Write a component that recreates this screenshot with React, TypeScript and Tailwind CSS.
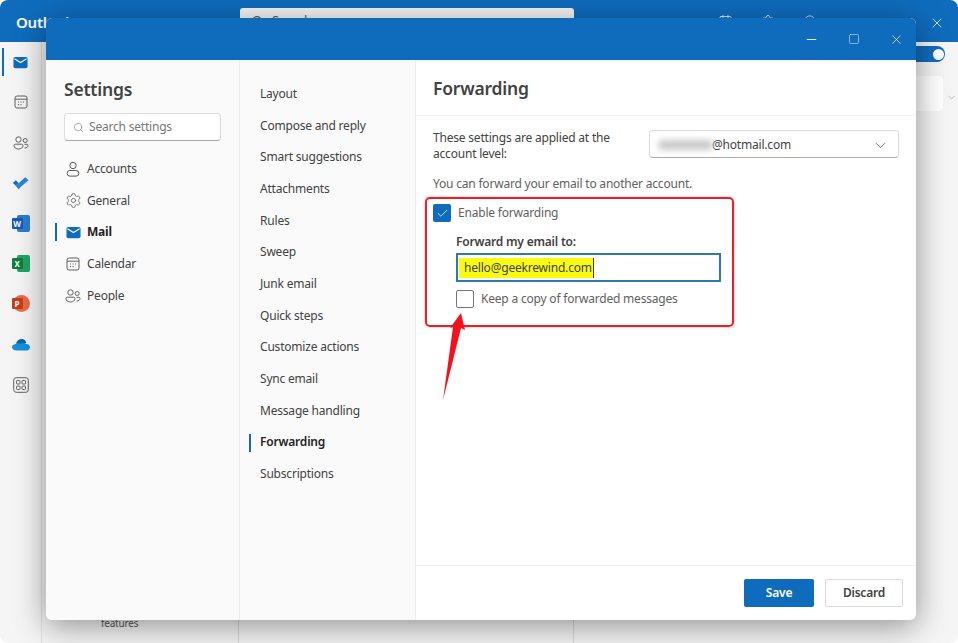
import { Calendar, Check, ChevronDown, Minus, Search, Settings, Square, X } from 'lucide-react';

const font = { fontFamily: '"Noto Sans", "Open Sans", sans-serif' };

const MailIcon = ({ className }: { className: string }) => (
  <svg viewBox="0 0 16 13" className={className}>
    <rect x="0.5" y="0.5" width="15" height="12" rx="2" fill="#0f6cbd" />
    <path d="M1.5 2.5 8 6.5l6.5-4" fill="none" stroke="#fff" strokeWidth="1.2" />
  </svg>
);

const PersonIcon = () => (
  <svg viewBox="0 0 16 16" className="w-[16px] h-[16px]" fill="none" stroke="#555" strokeWidth="1">
    <circle cx="8" cy="4.5" r="3.2" />
    <rect x="2.2" y="9.5" width="11.6" height="5.6" rx="2.6" />
  </svg>
);

const PeopleIcon = ({ className }: { className: string }) => (
  <svg viewBox="0 0 16 14" className={className} fill="none" stroke="#616161" strokeWidth="1">
    <circle cx="5.5" cy="3.5" r="2.7" />
    <path d="M1 9.5c0-.8.6-1.3 1.4-1.3h6.2c.8 0 1.4.5 1.4 1.3 0 2.4-2.2 3.5-4.5 3.5S1 11.9 1 9.5Z" />
    <circle cx="12.2" cy="4.5" r="2" />
    <path d="M11.5 8.3h2.3c.7 0 1.2.5 1.2 1.1 0 1.7-1.4 2.6-3.3 2.6" />
  </svg>
);

const CalendarSmall = ({ className }: { className: string }) => (
  <svg viewBox="0 0 14 14" className={className} fill="none" stroke="#616161" strokeWidth="1">
    <rect x="1" y="1" width="12" height="12" rx="2" />
    <path d="M1 4.2h12" />
    <path d="M4 7h1M6.5 7h1M9 7h1M4 9.6h1M6.5 9.6h1" strokeWidth="1.2" />
  </svg>
);

const OfficeIcon = ({ letter, from, to }: { letter: string; from: string; to: string }) => (
  <div className="relative w-[18px] h-[17px]">
    <div className="absolute right-0 top-0 w-[13px] h-[17px] rounded-[2px]" style={{ background: to }} />
    <div
      className="absolute left-0 top-[3px] w-[11px] h-[11px] rounded-[1px] text-white text-[8px] font-bold leading-[11px] text-center"
      style={{ background: from }}
    >
      {letter}
    </div>
  </div>
);

const railItems = [
  <MailIcon key="mail" className="w-[15px] h-[13px]" />,
  <CalendarSmall key="cal" className="w-[14px] h-[14px]" />,
  <PeopleIcon key="people" className="w-[16px] h-[14px]" />,
  <svg key="todo" viewBox="0 0 18 14" className="w-[17px] h-[14px]">
    <path d="M1 7l3-3 3 3-3 3z" fill="#0f6cbd" />
    <path d="M4 10l3-3 3 3-3 4z" fill="#5aa6e6" />
    <path d="M7 13l-3-3L14 1l3.5 3z" fill="#2b88d8" />
  </svg>,
  <OfficeIcon key="w" letter="W" from="#185abd" to="#2b7cd3" />,
  <OfficeIcon key="x" letter="X" from="#107c41" to="#21a366" />,
  <div key="p" className="relative w-[18px] h-[17px]">
    <div className="absolute right-0 top-0 w-[17px] h-[17px] rounded-full bg-[#ed6c47]" />
    <div className="absolute left-0 top-[3px] w-[11px] h-[11px] rounded-[1px] bg-[#c43e1c] text-white text-[8px] font-bold leading-[11px] text-center">
      P
    </div>
  </div>,
  <svg key="cloud" viewBox="0 0 18 13" className="w-[18px] h-[13px]">
    <path d="M4 5.5C5 2 8 .5 10.5 1c2 .4 3.4 2 3.8 3.8L8 8.5z" fill="#0364b8" />
    <path d="M4.5 12.5h10c2 0 3.5-1.3 3.5-3.2 0-1.8-1.6-3.5-3.8-3.3C12.5 4.5 10 4.5 8.500 6 7 4.5 4.5 4.5 3.5 6 1.5 6.3 0 7.5 0 9.3c0 2 2 3.2 4.5 3.2Z" fill="#1490df" />
  </svg>,
  <svg key="apps" viewBox="0 0 16 16" className="w-[16px] h-[16px]" fill="none" stroke="#616161" strokeWidth="1">
    <rect x="0.7" y="0.7" width="14.6" height="14.6" rx="2.5" />
    <rect x="3.5" y="3.5" width="3.5" height="3.5" rx="0.8" />
    <rect x="9" y="3.5" width="3.5" height="3.5" rx="0.8" />
    <rect x="3.5" y="9" width="3.5" height="3.5" rx="0.8" />
    <rect x="9" y="9" width="3.5" height="3.5" rx="0.8" />
  </svg>,
];

const subItems = [
  'Layout',
  'Compose and reply',
  'Smart suggestions',
  'Attachments',
  'Rules',
  'Sweep',
  'Junk email',
  'Quick steps',
  'Customize actions',
  'Sync email',
  'Message handling',
  'Forwarding',
  'Subscriptions',
];

const navItems = [
  { label: 'Accounts', icon: <PersonIcon /> },
  { label: 'General', icon: <Settings size={17} strokeWidth={1.1} color="#555" /> },
  { label: 'Mail', icon: <MailIcon className="w-[15px] h-[13px]" />, active: true },
  { label: 'Calendar', icon: <CalendarSmall className="w-[14px] h-[14px]" /> },
  { label: 'People', icon: <PeopleIcon className="w-[16px] h-[14px]" /> },
];

export default function App() {
  return (
    <div style={font} className="relative w-[958px] h-[643px] overflow-hidden bg-white text-[12px] tracking-[-0.2px]">
      {/* Outlook window behind the dialog */}
      <div className="flex flex-col h-full rounded-lg overflow-hidden bg-[#f5f5f5]">
        <div className="flex h-[42px] bg-[#0f6cbd] text-white shrink-0">
          <div className="w-[240px] pl-[16px] pt-[12px] text-[15px] font-semibold leading-[20px]">Outlook</div>
          <div className="w-[334px] h-[26px] mt-[8px] bg-[#f5f5f5] rounded-[3px] flex items-center gap-2 pl-[11px] text-[13px] text-[#555]">
            <Search size={13} />
            Search
          </div>
          <div className="flex-1 flex items-start pt-[14px] pl-[144px] gap-[27px]">
            <Calendar size={15} strokeWidth={1.2} />
            <Settings size={16} strokeWidth={1.2} />
            <Search size={15} strokeWidth={1.2} />
          </div>
          <div className="flex items-center pr-[13px] pt-[4px]">
            <X size={16} strokeWidth={1.2} />
          </div>
        </div>
        <div className="flex flex-1">
          <div className="w-[42px] border-r border-[#e0e0e0] relative">
            <div className="absolute left-[2px] top-[6px] w-[2px] h-[28px] bg-[#0f6cbd]" />
            {railItems.map((item, i) => (
              <div key={i} className="h-[40.3px] flex items-center justify-center">
                {item}
              </div>
            ))}
          </div>
          <div className="w-[197px] border-r border-[#d8d8d8] flex flex-col justify-end pl-[59px] pb-[12px] text-[10px] text-[#555]">
            features
          </div>
          <div className="w-[335px] border-r border-[#d8d8d8]" />
          <div className="flex-1 flex flex-col items-end pt-[4px] pr-[13px]">
            <div className="w-[40px] h-[16px] rounded-full bg-[#0f6cbd] flex items-center justify-end pr-[1px]">
              <div className="w-[11px] h-[11px] rounded-full bg-white" />
            </div>
            <div className="flex items-center mt-[14px] -mr-[12px]">
              <div className="w-[30px] h-[35px] bg-white rounded-[3px]" />
              <ChevronDown size={11} strokeWidth={1} color="#777" className="ml-[3px] mt-[8px]" />
            </div>
          </div>
        </div>
      </div>

      {/* Settings dialog */}
      <div className="absolute left-[46px] top-[18px] w-[870px] h-[602px] flex flex-col rounded-md overflow-hidden bg-white shadow-[0_6px_32px_rgba(0,0,0,0.42)]">
        <div className="h-[42px] shrink-0 bg-[#0f6cbd] flex items-center justify-end text-white pr-[12px] gap-[29px]">
          <Minus size={15} strokeWidth={1.4} />
          <Square size={12} strokeWidth={1} />
          <X size={15} strokeWidth={1.1} />
        </div>
        <div className="flex flex-1 min-h-0 text-[#424242]">
          {/* left nav */}
          <div className="w-[194px] bg-[#fafafa] border-r border-[#ececec] pl-[18px] pr-[18px] shrink-0">
            <div className="text-[17.5px] font-semibold leading-[24px] mt-[17px]">Settings</div>
            <div className="mt-[12px] h-[28px] bg-white border border-[#dcdcdc] border-b-[#aaa] rounded-[4px] flex items-center gap-[5px] pl-[8px] text-[#777]">
              <Search size={11} strokeWidth={1.3} />
              Search settings
            </div>
            <div className="mt-[12px]">
              {navItems.map((n) => (
                <div key={n.label} className="relative h-[31.7px] flex items-center">
                  {n.active && <div className="absolute -left-[9px] top-[7px] w-[2px] h-[18px] bg-[#0f6cbd]" />}
                  <div className="w-[18px] flex justify-center mr-[5px]">{n.icon}</div>
                  <span className={n.active ? 'font-bold text-[#242424]' : ''}>{n.label}</span>
                </div>
              ))}
            </div>
          </div>

          {/* sub nav */}
          <div className="w-[176px] bg-[#fafafa] border-r border-[#ececec] shrink-0 pt-[18px] pl-[20px]">
            {subItems.map((s) => (
              <div key={s} className="relative h-[31.7px] flex items-center">
                {s === 'Forwarding' && <div className="absolute -left-[11px] top-[7px] w-[2px] h-[18px] bg-[#0f6cbd]" />}
                <span className={s === 'Forwarding' ? 'font-semibold text-[#242424]' : ''}>{s}</span>
              </div>
            ))}
          </div>

          {/* content */}
          <div className="flex-1 flex flex-col min-w-0">
            <div className="h-[56px] shrink-0 border-b border-[#f0f0f0] pl-[17px] pt-[16px] text-[17.5px] font-semibold leading-[24px]">
              Forwarding
            </div>
            <div className="flex-1 pl-[17px] pr-[17px] pt-[14px]">
              <div className="flex">
                <div className="w-[216px] leading-[16px]">
                  These settings are applied at the
                  <br />
                  account level:
                </div>
                <div className="w-[250px] h-[28px] bg-white border border-[#dcdcdc] border-b-[#aaa] rounded-[4px] flex items-center pl-[9px] pr-[9px] pt-[2px]">
                  <div className="w-[53px] h-[10px] bg-[#c9c9c9] blur-[3px]" />
                  @hotmail.com
                  <ChevronDown size={17} strokeWidth={1} className="ml-auto" />
                </div>
              </div>
              <div className="mt-[14px] leading-[16px] text-[#616161]">You can forward your email to another account.</div>

              {/* red annotation box */}
              <div className="relative -ml-[8px] mt-[5px] w-[309px] h-[130px] border-2 border-[#e8202a] rounded-[5px] pl-[6px] pt-[5px] shadow-[0_0_2px_rgba(232,32,42,0.5)]">
                <div className="flex items-center h-[18px] text-[#616161]">
                  <div className="w-[18px] h-[18px] bg-[#0f6cbd] rounded-[2px] flex items-center justify-center mr-[7px]">
                    <Check size={13} strokeWidth={1.4} color="#fff" />
                  </div>
                  Enable forwarding
                </div>
                <div className="ml-[23px] mt-[12px] font-semibold leading-[16px]">Forward my email to:</div>
                <div className="ml-[23px] mt-[3px] w-[265px] h-[29px] border-2 border-[#2f7ba6] flex items-center pl-[1px]">
                  <div className="h-[20px] w-[135px] bg-[#fbfb12] border-r border-[#444] pl-[5px] leading-[20px] whitespace-nowrap">
                    hello@geekrewind.com
                  </div>
                </div>
                <div className="ml-[23px] mt-[8px] flex items-center text-[#616161]">
                  <div className="w-[18px] h-[18px] bg-white border border-[#757575] rounded-[2px] mr-[7px]" />
                  Keep a copy of forwarded messages
                </div>
              </div>
            </div>
            <div className="h-[55px] shrink-0 border-t border-[#f0f0f0] flex justify-end items-start pt-[13px] pr-[13px]">
              <div className="w-[70px] h-[28px] bg-[#0f6cbd] text-white font-semibold rounded-[2px] flex items-center justify-center">Save</div>
              <div className="w-[78px] h-[28px] ml-[11px] bg-white border border-[#dcdcdc] font-semibold rounded-[2px] flex items-center justify-center">
                Discard
              </div>
            </div>
          </div>
        </div>
      </div>

      {/* red arrow annotation */}
      <svg viewBox="0 0 30 90" className="absolute left-[438px] top-[312px] w-[30px] h-[90px]">
        <path d="M23 1 L27 18 L23 16 L5 88 L15 15 L12 16 Z" fill="#f5101c" />
      </svg>
    </div>
  );
}
